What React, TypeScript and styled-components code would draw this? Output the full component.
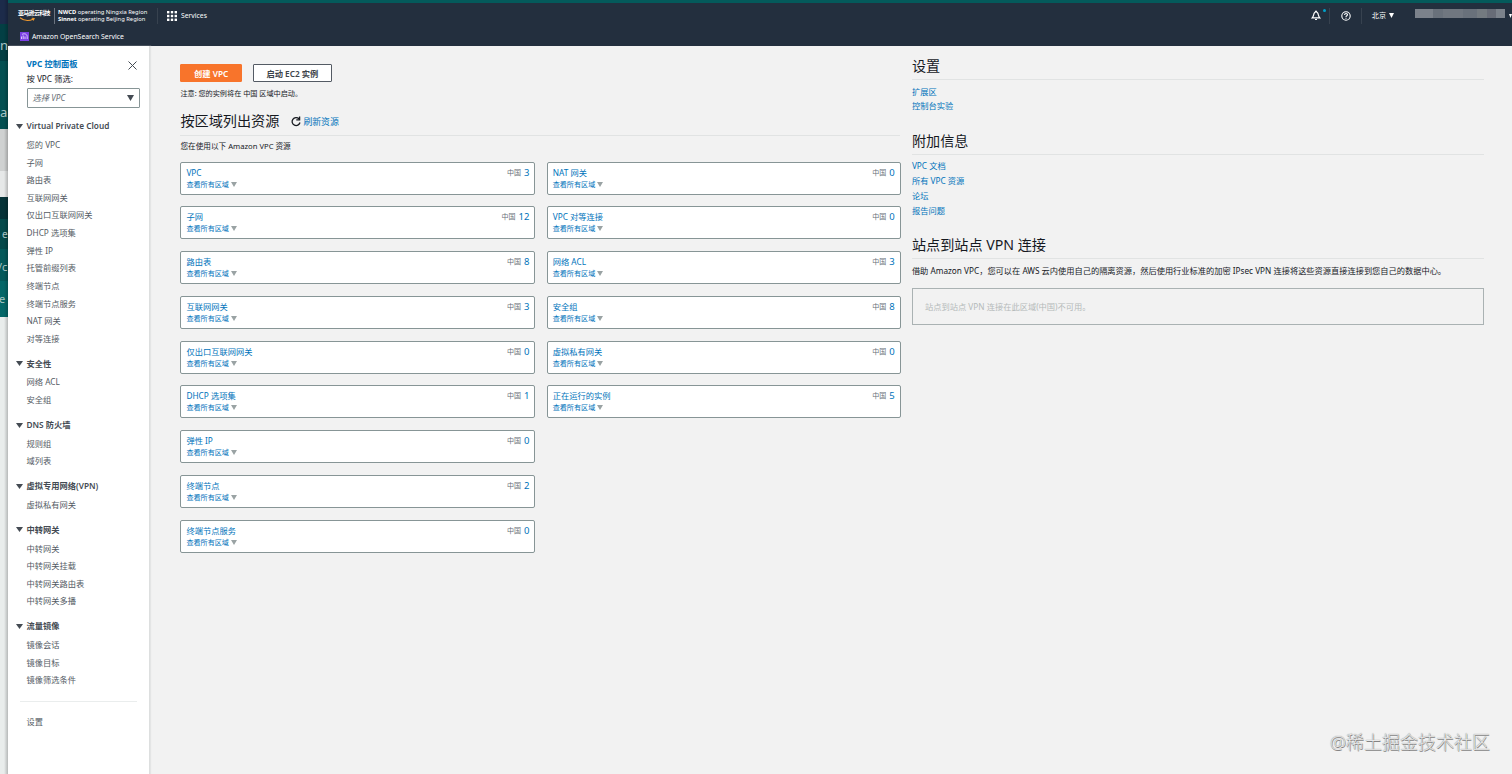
import React from 'react';
import styled, { createGlobalStyle } from 'styled-components';

const GlobalStyle = createGlobalStyle`
  * { box-sizing: border-box; }
  body {
    margin: 0;
    font-family: "Noto Sans", "Noto Sans CJK SC", sans-serif;
    font-size: 8.25px;
    line-height: 12px;
    color: #16191f;
    background: #f2f2f2;
    overflow: hidden;
  }
`;

const LINK = '#0073bb';

const Desktop = styled.div`
  height: 774px;
  display: flex;
  overflow: hidden;
`;

const Backdrop = styled.div`
  width: 8px;
  flex: none;
  overflow: hidden;
  display: flex;
  flex-direction: column;
`;

const Band = styled.div<{ $h: number; $bg: string; $size?: number; $shift?: number; $drop?: number }>`
  height: ${p => p.$h}px;
  flex: none;
  padding-top: ${p => p.$drop ?? 0}px;
  background: linear-gradient(90deg, transparent 4px, rgba(0, 0, 0, 0.22)) ${p => p.$bg};
  color: #a9c4c4;
  font-size: ${p => p.$size ?? 13}px;
  line-height: ${p => p.$h - (p.$drop ?? 0)}px;
  white-space: nowrap;
  text-indent: ${p => p.$shift ?? 0}px;
`;

const Window = styled.div`
  flex: 1;
  min-width: 0;
  display: flex;
  flex-direction: column;
  border-top: 3px solid #045a5b;
`;

const TopBar = styled.header`
  height: 43px;
  flex: none;
  background: #232f3e;
  color: #fff;
  font-size: 7px;
`;

const NavRow = styled.div`
  height: 25px;
  padding-left: 9px;
  display: flex;
  align-items: center;
`;

const Logo = styled.div`
  width: 38px;
  height: 14px;
  padding-left: 1px;
  font-size: 6px;
  line-height: 9px;
  font-weight: 700;
  letter-spacing: -0.7px;
  white-space: nowrap;
  svg { display: block; margin: -1px 0 0 1px; }
`;

const Divider = styled.span<{ $color: string; $ml: number; $mr: number }>`
  width: 1px;
  height: 16px;
  background: ${p => p.$color};
  margin: 0 ${p => p.$mr}px 0 ${p => p.$ml}px;
`;

const Regions = styled.div`
  width: 97px;
  font-size: 5.8px;
  line-height: 7px;
  white-space: nowrap;
`;

const Services = styled.div`
  display: flex;
  align-items: center;
  gap: 4px;
  font-size: 6.8px;
  flex: 1;
`;

const Account = styled.div`
  display: flex;
  align-items: center;
  font-size: 7.1px;
`;

const Region = styled.span`
  line-height: 10px;
  padding-bottom: 1px;
  margin-right: 3px;
`;

const Notification = styled.div`
  width: 19px;
  height: 16px;
  display: flex;
  align-items: center;
  svg { margin-left: 3px; }
  &::after {
    content: '';
    width: 3.5px;
    height: 3.5px;
    border-radius: 50%;
    background: #00a1c9;
    align-self: flex-start;
    margin: 1px 0 0 1.5px;
  }
`;

const Redacted = styled.div`
  display: flex;
  margin: -5px 4px 0 21px;
`;

const Block = styled.i<{ $w: number; $c: string }>`
  width: ${p => p.$w}px;
  height: 9px;
  background: ${p => p.$c};
`;

const Favorites = styled.div`
  height: 17.5px;
  padding-left: 12px;
  display: flex;
  align-items: center;
  gap: 3px;
  font-size: 6.85px;
`;

const Body = styled.div`
  flex: 1;
  display: flex;
  min-height: 0;
`;

const Sidebar = styled.nav`
  width: 142px;
  flex: none;
  background: #fff;
  border-right: 1px solid #dddfdf;
  box-shadow: 1px 0 1px #e4e5e5;
  color: #545b64;
`;

const SideHead = styled.div`
  padding: 12px 9px 8.6px 18.5px;
  color: #16191f;
`;

const SideTitle = styled.div`
  display: flex;
  justify-content: space-between;
  height: 15px;
  color: ${LINK};
  font-weight: 700;
  svg { margin: 2.5px 3.5px 0 0; }
`;

const Select = styled.div`
  height: 20px;
  margin-top: 3px;
  border: 1px solid #879596;
  border-radius: 1px;
  display: flex;
  align-items: center;
  justify-content: space-between;
  padding: 0 5px;
  font-style: italic;
  color: #687078;
`;

const Group = styled.section`
  margin-bottom: 6.6px;
`;

const GroupTitle = styled.div`
  height: 19.4px;
  padding-left: 7.5px;
  display: flex;
  align-items: center;
  gap: 4px;
  font-weight: 600;
  white-space: nowrap;
  color: #444b53;
`;

const Item = styled.div`
  height: 17.63px;
  line-height: 17.63px;
  padding-left: 18.5px;
`;

const Rule = styled.hr`
  border: 0;
  height: 1px;
  background: #eaeded;
  margin: 12px 12px 11px 12px;
`;

const Main = styled.main`
  flex: 1;
  display: flex;
  gap: 11.5px;
  padding-left: 30.4px;
`;

const Resources = styled.section`
  width: 720px;
  flex: none;
  padding-top: 18.3px;
`;

const Buttons = styled.div`
  display: flex;
  gap: 11px;
`;

const Button = styled.button<{ $primary?: boolean; $w: number }>`
  width: ${p => p.$w}px;
  height: 18px;
  padding: 0;
  font: inherit;
  line-height: 15px;
  font-weight: 600;
  color: ${p => (p.$primary ? '#fff' : '#3c434a')};
  background: ${p => (p.$primary ? '#f8742b' : '#fff')};
  border: 1px solid ${p => (p.$primary ? '#f8742b' : '#545b64')};
  border-radius: 1px;
`;

const Note = styled.p<{ $mt: number; $size?: number }>`
  margin: ${p => p.$mt}px 0 0;
  font-size: ${p => p.$size ?? 8.22}px;
  white-space: nowrap;
`;

const Heading = styled.h2<{ $mt: number; $h: number }>`
  margin: ${p => p.$mt}px 0 0;
  height: ${p => p.$h}px;
  border-bottom: 1px solid #e1e3e3;
  display: flex;
  align-items: center;
  padding-bottom: 3px;
  font-size: 14.15px;
  line-height: 20px;
  font-weight: 400;
`;

const Refresh = styled.a`
  display: flex;
  align-items: center;
  gap: 2px;
  margin-left: 12px;
  padding-top: 2px;
  font-size: 8.9px;
  color: ${LINK};
`;

const Cards = styled.div`
  display: grid;
  grid-template-columns: 355px 354px;
  column-gap: 11.3px;
  row-gap: 11.75px;
  margin-top: 10px;
`;

const Card = styled.article<{ $col: number; $row: number }>`
  grid-column: ${p => p.$col};
  grid-row: ${p => p.$row};
  height: 33px;
  background: #fff;
  border: 1px solid #879596;
  border-radius: 2px;
  padding: 4px 5px 0;
  color: ${LINK};
`;

const CardTop = styled.div`
  display: flex;
  justify-content: space-between;
  height: 12px;
`;

const Count = styled.span`
  display: flex;
  gap: 3px;
  font-size: 9.5px;
  small { font-size: 7px; color: #687078; }
`;

const AllRegions = styled.div`
  display: flex;
  align-items: center;
  gap: 2px;
  font-size: 7.1px;
  line-height: 11px;
`;

const Aside = styled.aside`
  width: 572.5px;
  padding-top: 10px;
`;

const Links = styled.div`
  padding-top: 4.6px;
  line-height: 14.8px;
  color: ${LINK};
`;

const Unavailable = styled.div`
  height: 37px;
  margin-top: 11px;
  padding-left: 12px;
  border: 1px solid #aab2b3;
  line-height: 35px;
  color: #b5baba;
`;

const Watermark = styled.div`
  position: absolute;
  left: 1330px;
  top: 729px;
  font-size: 18px;
  line-height: 26px;
  color: #e9e9e9;
  white-space: nowrap;
  font-weight: 300;
  text-shadow: 0 0 1px #666, 0.5px 0.5px 0.5px #888;
`;

const Caret = ({ w = 6, h = 5, color = '#444b53' }) => (
  <svg width={w} height={h} viewBox="0 0 6 5" preserveAspectRatio="none"><path d="M0 0h6L3 5z" fill={color} /></svg>
);

const groups: [string, string[]][] = [
  ['Virtual Private Cloud', ['您的 VPC', '子网', '路由表', '互联网网关', '仅出口互联网网关', 'DHCP 选项集', '弹性 IP', '托管前缀列表', '终端节点', '终端节点服务', 'NAT 网关', '对等连接']],
  ['安全性', ['网络 ACL', '安全组']],
  ['DNS 防火墙', ['规则组', '域列表']],
  ['虚拟专用网络(VPN)', ['虚拟私有网关']],
  ['中转网关', ['中转网关', '中转网关挂载', '中转网关路由表', '中转网关多播']],
  ['流量镜像', ['镜像会话', '镜像目标', '镜像筛选条件']],
];

const cards: [string, number][][] = [
  [['VPC', 3], ['子网', 12], ['路由表', 8], ['互联网网关', 3], ['仅出口互联网网关', 0], ['DHCP 选项集', 1], ['弹性 IP', 0], ['终端节点', 2], ['终端节点服务', 0]],
  [['NAT 网关', 0], ['VPC 对等连接', 0], ['网络 ACL', 3], ['安全组', 8], ['虚拟私有网关', 0], ['正在运行的实例', 5]],
];

const redaction: [number, string][] = [[18, '#7b828b'], [10, '#69717b'], [20, '#707780'], [14, '#69717b'], [10, '#737a80'], [9, '#676c77'], [9, '#7b828b']];

export default function App() {
  return (
    <Desktop>
      <GlobalStyle />
      <Backdrop>
        <Band $h={24} $bg="#1c2b4a" />
        <Band $h={37} $bg="#033f44" $drop={5}>n</Band>
        <Band $h={68} $bg="#045052" $drop={34}>a</Band>
        <Band $h={42} $bg="#cfd1d1" />
        <Band $h={26} $bg="#e6e8e8" />
        <Band $h={22} $bg="#063338" />
        <Band $h={30} $bg="#054a4b" $size={10} $shift={2}>e</Band>
        <Band $h={32} $bg="#04595a" $size={11} $shift={-2} $drop={4}>/c</Band>
        <Band $h={36} $bg="#046768" $size={11} $shift={-1}>e</Band>
        <Band $h={457} $bg="#e9edec" />
      </Backdrop>
      <Window>
        <TopBar>
          <NavRow>
            <Logo>
              亚马逊云科技
              <svg width="17" height="5" viewBox="0 0 17 5" fill="none" stroke="#f29a2e" strokeWidth="1.1">
                <path d="M1 .8C5 4 10 4.2 14.5 2M12.7 1.3l2.4.2-.9 2" />
              </svg>
            </Logo>
            <Divider $color="#6b7480" $ml={-1} $mr={3} />
            <Regions>
              <div><b>NWCD</b> operating Ningxia Region</div>
              <div><b>Sinnet</b> operating Beijing Region</div>
            </Regions>
            <Divider $color="#37424f" $ml={2} $mr={9} />
            <Services>
              <svg width="10" height="10" fill="#fff">
                {[0, 3.8, 7.6].map(y => [0, 3.8, 7.6].map(x => <rect key={`${x}-${y}`} x={x} y={y} width="2.4" height="2.4" />))}
              </svg>
              Services
            </Services>
            <Account>
              <Notification>
                <svg width="10" height="11" viewBox="0 0 10 11" fill="none" stroke="#fff" strokeWidth="1.2">
                  <path d="M1.2 7.8C2.5 6.5 2.6 4.8 3 3.6 3.5 2.4 4.2 2.2 5 1.2 5.800 2.200 6.500 2.400 7 3.600c.4 1.200.5 2.900 1.800 4.200zM4 9.500h2" />
                </svg>
              </Notification>
              <Divider $color="#37424f" $ml={2} $mr={11} />
              <svg width="10" height="10" viewBox="0 0 10 10" fill="none" stroke="#fff" strokeWidth="1.1">
                <circle cx="5" cy="5" r="4.2" />
                <path d="M3.6 4c0-2 2.9-1.8 2.9-.2C6.5 4.9 5 4.7 5 6M5 6.8v1" />
              </svg>
              <Divider $color="#37424f" $ml={9.5} $mr={10} />
              <Region>北京</Region>
              <Caret w={5} h={5} color="#fff" />
              <Redacted>{redaction.map(([w, c], i) => <Block key={i} $w={w} $c={c} />)}</Redacted>
              <Caret w={3} h={4} color="#fff" />
            </Account>
          </NavRow>
          <Favorites>
            <svg width="9" height="9" viewBox="0 0 9 9">
              <rect width="9" height="9" fill="#7b3fe4" />
              <path d="M1.5 7V4.5M3.2 7V3.5M5 7V4.5M2 2.5c2-1.5 5.2-.5 5.2 2V7" stroke="#e3d4ff" strokeWidth=".9" fill="none" />
            </svg>
            Amazon OpenSearch Service
          </Favorites>
        </TopBar>
        <Body>
          <Sidebar>
            <SideHead>
              <SideTitle>
                VPC 控制面板
                <svg width="9" height="9" viewBox="0 0 9 9" stroke="#444b53" strokeWidth="1"><path d="M.5.5l8 8M8.5.5l-8 8" /></svg>
              </SideTitle>
              <div>按 VPC 筛选:</div>
              <Select>选择 VPC<Caret w={7} h={6} /></Select>
            </SideHead>
            {groups.map(([title, items]) => (
              <Group key={title}>
                <GroupTitle><Caret w={7} h={5} />{title}</GroupTitle>
                {items.map(t => <Item key={t}>{t}</Item>)}
              </Group>
            ))}
            <Rule />
            <Item>设置</Item>
          </Sidebar>
          <Main>
            <Resources>
              <Buttons>
                <Button $primary $w={61.5}>创建 VPC</Button>
                <Button $w={79}>启动 EC2 实例</Button>
              </Buttons>
              <Note $mt={5} $size={7.15}>注意: 您的实例将在 中国 区域中启动。</Note>
              <Heading $mt={10.4} $h={26}>
                按区域列出资源
                <Refresh>
                  <svg width="10" height="11" viewBox="0 0 10 11" fill="none" stroke="#16191f" strokeWidth="1.3">
                    <path d="M8 2.8A4 4 0 1 0 9 6.5M8.6.6v3.2H5.3" />
                  </svg>
                  刷新资源
                </Refresh>
              </Heading>
              <Note $mt={4} $size={7.65}>您在使用以下 Amazon VPC 资源</Note>
              <Cards>
                {cards.map((column, c) => column.map(([name, n], r) => (
                  <Card key={name} $col={c + 1} $row={r + 1}>
                    <CardTop>{name}<Count><small>中国</small>{n}</Count></CardTop>
                    <AllRegions>查看所有区域<Caret w={6} h={5} color="#9aa3a4" /></AllRegions>
                  </Card>
                )))}
              </Cards>
            </Resources>
            <Aside>
              <Heading $mt={0} $h={24}>设置</Heading>
              <Links><div>扩展区</div><div>控制台实验</div></Links>
              <Heading $mt={16.6} $h={24}>附加信息</Heading>
              <Links><div>VPC 文档</div><div>所有 VPC 资源</div><div>论坛</div><div>报告问题</div></Links>
              <Heading $mt={16.4} $h={24}>站点到站点 VPN 连接</Heading>
              <Note $mt={6}>借助 Amazon VPC，您可以在 AWS 云内使用自己的隔离资源，然后使用行业标准的加密 IPsec VPN 连接将这些资源直接连接到您自己的数据中心。</Note>
              <Unavailable>站点到站点 VPN 连接在此区域(中国)不可用。</Unavailable>
            </Aside>
          </Main>
        </Body>
      </Window>
      <Watermark>@稀土掘金技术社区</Watermark>
    </Desktop>
  );
}
